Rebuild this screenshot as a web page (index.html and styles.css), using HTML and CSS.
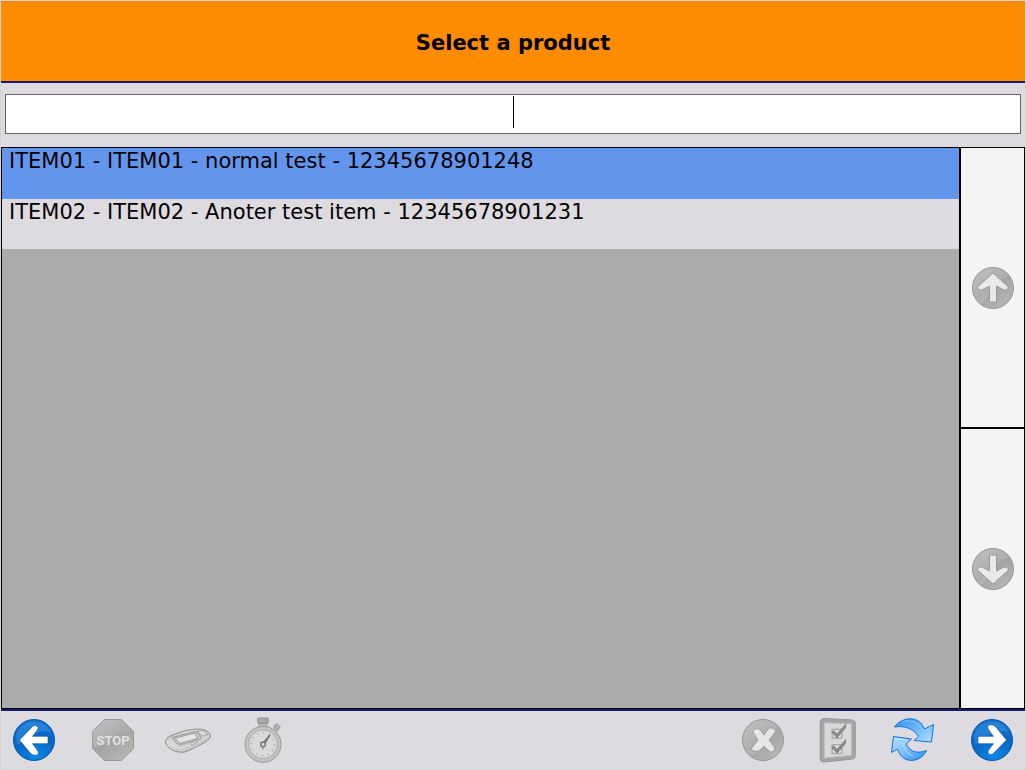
FILE: index.html
```html
<!DOCTYPE html>
<html lang="en">
<head>
<meta charset="utf-8">
<title>Select a product</title>
<link rel="stylesheet" href="styles.css">
</head>
<body>
<svg class="defs" aria-hidden="true">
  <defs>
    <radialGradient id="blue" cx=".55" cy=".9" r=".9"><stop offset="0" stop-color="#0989e8"/><stop offset=".55" stop-color="#0866c5"/><stop offset="1" stop-color="#1272cc"/></radialGradient>
    <linearGradient id="grey" x1="0" y1="0" x2=".7" y2="1"><stop offset="0" stop-color="#bababa"/><stop offset=".55" stop-color="#a3a3a3"/><stop offset="1" stop-color="#b5b5b5"/></linearGradient>
    <linearGradient id="silver" x1="0" y1="0" x2="1" y2="1"><stop offset="0" stop-color="#b4b4b4"/><stop offset=".35" stop-color="#d8d8d8"/><stop offset=".7" stop-color="#c8c8c8"/><stop offset="1" stop-color="#969696"/></linearGradient>
    <linearGradient id="sky" x1="0" y1="0" x2="1" y2="1"><stop offset="0" stop-color="#2f8cec"/><stop offset=".6" stop-color="#7cc0ff"/><stop offset="1" stop-color="#b9e0ff"/></linearGradient>
    <linearGradient id="sky2" x1="0" y1="0" x2="1" y2="1"><stop offset="0" stop-color="#b9e0ff"/><stop offset=".5" stop-color="#7cc0ff"/><stop offset="1" stop-color="#2c8ae8"/></linearGradient>
    <path id="arrow" d="M-14.500 0-1-14Q1-15.500 3-14 4.500-13 4-11 1.500-7-1.500-3.700H13Q14-3.700 14-2.700V2.700Q14 3.700 13 3.700H-1.500Q1.500 7 4 11.500 5 14 3 15 0 16-3 14Z"/>
    <path id="pointer" d="M0-15 15-1.500C16 0 14 2.500 11 2L3.500-2V12Q3.500 14 2 14H-2Q-3.500 14-3.500 12V-2L-11 2C-14 2.500-16 0-15-1.500Z"/>
  </defs>
</svg>
<div class="app">
  <header class="header"><h1 class="title">Select a product</h1></header>
  <main class="main">
    <div class="search">
      <input class="search-input" type="text" aria-label="Product">
      <span class="caret"></span>
    </div>
    <div class="browser">
      <ul class="list">
        <li><button class="row selected" type="button">ITEM01 - ITEM01 - normal test - 12345678901248</button></li>
        <li><button class="row" type="button">ITEM02 - ITEM02 - Anoter test item - 12345678901231</button></li>
      </ul>
      <div class="scroller">
        <button class="scroll" type="button" aria-label="Scroll up">
          <svg class="icon" viewBox="-22 -22 44 44"><circle r="20.500" fill="url(#grey)" stroke="#969696"/><path d="M-20 0A20 20 0 0 1 16-12Q3-8-3 4T-12 16A20 20 0 0 1-20 0Z" fill="#fff" opacity=".12"/><use href="#pointer" fill="#e9e9e9" stroke="#8d8d8d" stroke-width=".8"/></svg>
        </button>
        <button class="scroll" type="button" aria-label="Scroll down">
          <svg class="icon" viewBox="-22 -22 44 44"><circle r="20.500" fill="url(#grey)" stroke="#969696"/><path d="M-20 0A20 20 0 0 1 16-12Q3-8-3 4T-12 16A20 20 0 0 1-20 0Z" fill="#fff" opacity=".12"/><use href="#pointer" transform="rotate(180)" fill="#e9e9e9" stroke="#8d8d8d" stroke-width=".8"/></svg>
        </button>
      </div>
    </div>
  </main>
  <footer class="toolbar">
    <div class="group">
      <button class="tool back" type="button" aria-label="Back">
        <svg class="icon" viewBox="-22 -22 44 44"><circle r="20.500" fill="url(#blue)" stroke="#0757ad"/><path d="M-18-5A19 19 0 0 1 17-8Q4-11-4-3T-17 4Z" fill="#62b7fa" opacity=".28"/><use href="#arrow" fill="#fff" stroke="#07479c" stroke-width=".6"/></svg>
      </button>
      <button class="tool" type="button" aria-label="Stop">
        <svg class="icon" viewBox="-22 -22 44 44"><path d="M-8.500-20.500H8.500L20.500-8.500V8.500L8.500 20.500H-8.500L-20.500 8.500V-8.500Z" fill="url(#grey)" stroke="#999"/><path d="M-8-20H8L20-8Q4-8-4 0T-20 8V-8Z" fill="#fff" opacity=".1"/><text class="stop-text" text-anchor="middle" y="5">STOP</text></svg>
      </button>
      <button class="tool" type="button" aria-label="Scanner">
        <svg class="icon wide" viewBox="4 1 48 46"><path d="M5.500 25Q6 22 11 19.500 23 14 36 13Q42 12.500 47 15 50.500 17 50.500 21 49 24 42 28L30 34Q24 37.500 18 36 9 34 6 28Z" fill="url(#silver)" stroke="#8e8e8e"/><path d="M6.500 25Q12 31 21 32 30 30 49 20" fill="none" stroke="#e8e8e8" opacity=".7"/><path d="M12 21.500 35 15.500 39 17 41 23 20 29 16 27Z" fill="#c6c6c6" stroke="#a2a2a2"/><path d="M15 22 34.500 17 38 22.500 20 27.500Z" fill="#e3e3e3" stroke="#999"/><path d="M37 15 43 14.500 48 18.500 42 20ZM30 27 37 24.500 38 26 32 29Z" fill="#dadada" stroke="#999" stroke-width=".8"/></svg>
      </button>
      <button class="tool" type="button" aria-label="Timer">
        <svg class="icon" viewBox="0 0 42 48"><path d="M17 6H25V13H17Z" fill="#bbb" stroke="#999"/><rect x="15.500" y="1" width="11" height="5.500" rx="1" fill="#a9a9a9" stroke="#8c8c8c"/><path d="m31 14 3-4 3 3-3 4z" fill="#bbb" stroke="#999"/><path d="m32 10 3-3 4 3-2.500 4z" fill="#b4b4b4" stroke="#999"/><circle cx="21" cy="28.500" r="18.800" fill="#c2c2c2" stroke="#989898"/><circle cx="21" cy="28.500" r="15" fill="#d9d9d9" stroke="#aaa"/><circle cx="21" cy="28.500" r="12" fill="none" stroke="#a4a4a4" stroke-width="2" stroke-dasharray="1 5.280"/><path d="M20 27 28 18 29 19 23 29Z" fill="#777"/><circle cx="21" cy="28.500" r="2.500" fill="#ddd" stroke="#777" stroke-width="1.500"/><path d="M21 31V34" stroke="#888"/></svg>
      </button>
    </div>
    <div class="group">
      <button class="tool" type="button" aria-label="Cancel">
        <svg class="icon" viewBox="-22 -22 44 44"><circle r="20.500" fill="url(#grey)" stroke="#969696"/><path d="M-20 0A20 20 0 0 1 16-12Q3-8-3 4T-12 16A20 20 0 0 1-20 0Z" fill="#fff" opacity=".12"/><path d="M-10-8Q-9-12-4-11L1-5 6-12Q10-13 13-9L6 0 12 8Q12 12 8 12L6 11 1 6-4 11Q-10 12-12 9L-5 0Z" fill="#e6e6e6" stroke="#8e8e8e" stroke-width=".7"/></svg>
      </button>
      <button class="tool" type="button" aria-label="Checklist">
        <svg class="icon" viewBox="0 0 40 48"><path d="M5 1.500 34 3Q38 3 38 6V41Q38 44 34 44L6 47Q1.500 47 1.500 44V5Q1.500 2 5 1.500Z" fill="#a5a5a5" stroke="#939393"/><path d="M5.500 6 34 7V40L5.500 43Z" fill="#d9d9d9" stroke="#b5b5b5"/><path d="M14 13H24V22H14ZM14 29H24V38H14Z" fill="#e7e7e7" stroke="#a9a9a9" stroke-width="1.500"/><path d="M12.500 15 16 14 19 17 28.500 6.500V11L19 22.500ZM12.500 31 16 30 19 33 28.500 22.500V27L19 38.500Z" fill="#8a8a8a"/></svg>
      </button>
      <button class="tool" type="button" aria-label="Refresh">
        <svg class="icon" viewBox="6 3 44 46"><path d="M9.500 13C16 3 34 .5 39.500 15L48.500 10.500 46.500 28 29 26.500 33.500 22.500C28 14 19 11.500 9.500 13Z" fill="url(#sky)" stroke="#1473d2" stroke-linejoin="round"/><path d="M16 8Q30 3 38 17L46.500 13" fill="none" stroke="#a9daff" opacity=".6"/><path d="M8.500 22.500 26.500 25 21 30C26 39 33 39.500 41.500 36.500C36 49 17 51 12.500 35L6.500 38.500Z" fill="url(#sky2)" stroke="#1473d2" stroke-linejoin="round"/><path d="M10 24.500 23 26.500 18 30Q20 39 28 42" fill="none" stroke="#d2edff" opacity=".6"/></svg>
      </button>
      <button class="tool next" type="button" aria-label="Next">
        <svg class="icon" viewBox="-22 -22 44 44"><circle r="20.500" fill="url(#blue)" stroke="#0757ad"/><path d="M-18-5A19 19 0 0 1 17-8Q4-11-4-3T-17 4Z" fill="#62b7fa" opacity=".28"/><use href="#arrow" transform="rotate(180)" fill="#fff" stroke="#07479c" stroke-width=".6"/></svg>
      </button>
    </div>
  </footer>
</div>
</body>
</html>
```
FILE: styles.css
```css
* { box-sizing: border-box; }
html, body { height: 100%; }
body {
  margin: 0;
  background: #dddbe0;
  color: #000;
  font-family: Verdana, "DejaVu Sans", sans-serif;
  font-size: 21px;
}
button { font: inherit; color: inherit; border: 0; padding: 0; background: none; cursor: pointer; }
.defs { position: absolute; width: 0; height: 0; }
.app {
  display: flex;
  flex-direction: column;
  min-height: 100%;
  border: 1px solid #d3d3d3;
}
.header {
  display: flex;
  align-items: center;
  justify-content: center;
  height: 82px;
  padding-top: 4px;
  background: #ff8c00;
  border-bottom: 2px solid #191970;
}
.title { margin: 0; font-size: 21px; line-height: 24px; font-weight: bold; }
.main { flex: 1; display: flex; flex-direction: column; }
.search { position: relative; margin: 11px 4px 13px; height: 40px; }
.search-input {
  display: block;
  width: 100%;
  height: 100%;
  border: 1px solid #646464;
  background: #fff;
  font: inherit;
  text-align: center;
  outline: 0;
}
.caret { position: absolute; left: 50%; top: 2px; width: 1px; height: 32px; background: #000; }
.browser { flex: 1; display: flex; border: 1px solid #000; background: #ababab; }
.list { flex: 1; margin: 0; padding: 0; list-style: none; }
.row {
  display: block;
  width: 100%;
  min-height: 50px;
  padding: 0 7px 24px;
  line-height: 26px;
  text-align: left;
  background: #dddbe0;
}
.row.selected { background: #6495ed; padding-bottom: 25px; }
.scroller { display: flex; flex-direction: column; width: 65px; border-left: 2px solid #000; background: #f4f4f4; }
.scroll { flex: 1; display: flex; align-items: center; justify-content: center; }
.scroll + .scroll { border-top: 2px solid #000; }
.toolbar {
  display: flex;
  justify-content: space-between;
  height: 60px;
  padding: 0 10px;
  border-top: 2px solid #191970;
}
.group { display: flex; gap: 29px; align-items: center; }
.tool { display: flex; align-items: center; justify-content: center; width: 46px; height: 56px; }
.tool.back { margin-right: 4px; }
.tool.next { margin-left: 4px; }
.icon { display: block; flex: none; width: 44px; height: 44px; }
.tool .icon { height: 46px; }
.tool .wide { width: 48px; }
.stop-text { font: bold 13px Roboto, sans-serif; fill: #e1e1e1; }
```
